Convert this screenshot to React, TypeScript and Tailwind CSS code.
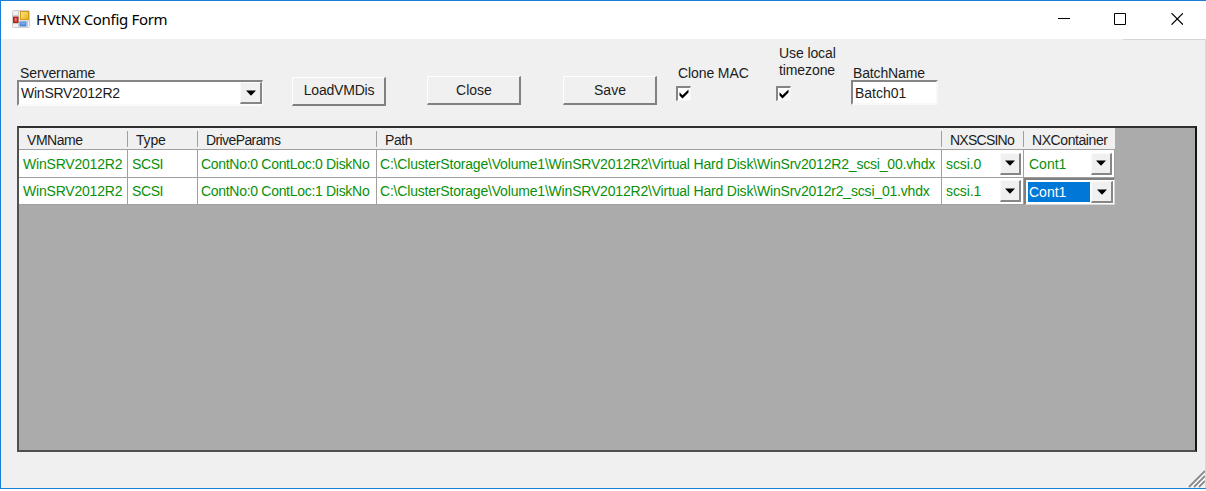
import type { ReactNode } from "react";

function FormIcon() {
  return (
    <svg width="18" height="18" viewBox="0 0 18 18">
      <defs>
        <linearGradient id="y" x1="0" y1="0" x2="1" y2="1">
          <stop offset="0" stopColor="#ffe58c" />
          <stop offset="1" stopColor="#eeb012" />
        </linearGradient>
        <linearGradient id="b" x1="0" y1="0" x2="0" y2="1">
          <stop offset="0" stopColor="#8fc0f8" />
          <stop offset="1" stopColor="#3d82de" />
        </linearGradient>
      </defs>
      <rect x="0.5" y="0.5" width="17" height="17" rx="1" fill="#f1f1f1" stroke="#cfcfcf" />
      <path d="M1 5.500H7M1 13.500H7M6.500 1V17M15.500 11V17M7 11H17" stroke="#cccccc" />
      <rect x="1.500" y="7" width="4.500" height="5.500" fill="#cc3e30" stroke="#a3251d" />
      <rect x="3" y="8.500" width="1.500" height="2" fill="#ee9186" />
      <rect x="8.500" y="1.500" width="8" height="8" fill="url(#y)" stroke="#cf9c22" />
      <rect x="8" y="12" width="6" height="4" fill="url(#b)" stroke="#4c83cc" />
    </svg>
  );
}

function ArrowButton({ className = "" }: { className?: string }) {
  return (
    <div
      className={
        "flex shrink-0 items-center justify-center border-t border-l border-b-2 border-r-2 border-t-[#fafafa] border-l-[#fafafa] border-b-[#868686] border-r-[#868686] bg-[#f0f0f0] " +
        className
      }
    >
      <svg width="10" height="6" viewBox="0 0 10 6">
        <path d="M0 0.500H10L5 5.800Z" fill="#000" />
      </svg>
    </div>
  );
}

function Button({ children, className = "" }: { children: ReactNode; className?: string }) {
  return (
    <button
      className={
        "h-[29px] w-[94px] shrink-0 border-t border-l border-b-2 border-r-2 border-t-white border-l-white border-b-[#808080] border-r-[#808080] bg-[#f0f0f0] pl-px text-center leading-[16px] " +
        className
      }
    >
      {children}
    </button>
  );
}

function CheckBox() {
  return (
    <div className="flex size-[15px] items-center justify-center border-t-2 border-l-2 border-b border-r border-t-[#858585] border-l-[#858585] border-b-[#f6f6f6] border-r-[#f6f6f6] bg-white">
      <svg width="10" height="10" viewBox="0 0 10 10">
        <path d="M0.500 3.200L3.500 6.200L9.500 0.400V3.600L3.500 9.400L0.500 6.400Z" fill="#000" />
      </svg>
    </div>
  );
}

const headers = [
  { label: "VMName", cls: "tracking-[-0.45px]" },
  { label: "Type", cls: "tracking-[-0.2px]" },
  { label: "DriveParams", cls: "tracking-[-0.6px]" },
  { label: "Path", cls: "tracking-[-0.4px]" },
  { label: "NXSCSINo", cls: "tracking-[-0.75px]" },
  { label: "NXContainer", cls: "tracking-[-0.42px]" },
];

const rows = [
  {
    drive: "ContNo:0 ContLoc:0 DiskNo",
    path: "C:\\ClusterStorage\\Volume1\\WinSRV2012R2\\Virtual Hard Disk\\WinSrv2012R2_scsi_00.vhdx",
    scsi: "scsi.0",
    selected: false,
  },
  {
    drive: "ContNo:0 ContLoc:1 DiskNo",
    path: "C:\\ClusterStorage\\Volume1\\WinSRV2012R2\\Virtual Hard Disk\\WinSrv2012r2_scsi_01.vhdx",
    scsi: "scsi.1",
    selected: true,
  },
];

const columns = "grid grid-cols-[109px_70px_179px_565px_82px_91px]";
const cell = "flex items-center overflow-hidden border-r border-b border-[#a0a0a0] bg-white";

export default function App() {
  return (
    <div className="h-[491px] w-[1206px] overflow-hidden bg-white font-['Liberation_Sans',Arial,sans-serif] text-[14px] leading-[16px] whitespace-nowrap text-[#1c1c1c]">
      <div className="flex h-[489px] flex-col border-t border-b border-l border-[#1a7fd4]">
        <header className="flex h-[38px] shrink-0 items-start bg-white pl-[11px]">
          <div className="mt-[9px]">
            <FormIcon />
          </div>
          <h1 className="mt-[8px] ml-[6px] font-['Noto_Sans',sans-serif] text-[15px] leading-[20px] tracking-[-0.32px] text-black">
            HVtNX Config Form
          </h1>
          <div className="mt-[12px] mr-[23px] ml-auto flex gap-[44px]">
            <svg width="12" height="12" viewBox="0 0 12 12">
              <path d="M0 5.500H12" stroke="#000" />
            </svg>
            <svg width="12" height="12" viewBox="0 0 12 12">
              <path d="M0.500 0.500H11.500V11.500H0.500Z" fill="none" stroke="#000" />
            </svg>
            <svg width="13" height="12" viewBox="0 0 13 12">
              <path d="M1.500 0.200L13 11.700M13 0.200L1.500 11.700" stroke="#000" strokeWidth="1.200" />
            </svg>
          </div>
        </header>

        <main className="flex grow flex-col border-r border-[#d8d8d8] bg-[#f0f0f0] pl-[16px]">
          <div className="flex justify-end">
            <div className="h-px w-[82px] bg-[#d5d5d5]" />
          </div>
          <div className="flex h-[86px] items-start">
            <div className="mt-[25px] w-[246px]">
              <div className="pl-[3px] tracking-[-0.1px]">Servername</div>
              <div className="-mt-px flex h-[26px] border-t-2 border-l-2 border-r border-b-2 border-t-[#858585] border-l-[#858585] border-b-[#fafafa] border-r-[#fafafa] bg-white">
                <div className="grow pt-[3px] pl-[2px] tracking-[-0.24px]">WinSRV2012R2</div>
                <ArrowButton className="w-[22px]" />
              </div>
            </div>
            <Button className="mt-[37px] ml-[29px] pb-[2px] tracking-[-0.2px]">LoadVMDis</Button>
            <Button className="mt-[36px] ml-[41px] pb-px">Close</Button>
            <Button className="mt-[36px] ml-[42px] pb-px">Save</Button>
            <div className="mt-[25px] ml-[19px] w-[100px]">
              <div className="pl-[2px] tracking-[-0.1px]">Clone MAC</div>
              <div className="mt-[5px]">
                <CheckBox />
              </div>
            </div>
            <div className="mt-[5px] w-[75px]">
              <div className="pl-[3px] leading-[17px] tracking-[-0.1px]">
                Use local
                <br />
                timezone
              </div>
              <div className="mt-[7px]">
                <CheckBox />
              </div>
            </div>
            <div className="mt-[25px] w-[87px]">
              <div className="pl-[2px] tracking-[-0.15px]">BatchName</div>
              <div className="-mt-px h-[25px] border-t-2 border-l-2 border-b-2 border-r-2 border-t-[#858585] border-l-[#858585] border-b-[#f8f8f8] border-r-[#f8f8f8] bg-white pt-[3px] pl-[2px]">
                Batch01
              </div>
            </div>
          </div>

          <div className="h-[326px] w-[1180px] border-2 border-t-[#303030] border-l-[#505050] border-b-[#505050] border-r-[#151515] bg-[#ababab]">
            <div className="w-[1096px]">
              <div className={columns + " h-[22px] border-b border-[#a0a0a0] bg-[#f0f0f0]"}>
                {headers.map((h, i) => (
                  <div key={h.label} className="flex pt-[3px] pb-[2px]">
                    <div className={"grow pt-[2px] pl-[8px] leading-[14px] " + h.cls}>{h.label}</div>
                    {i < 5 && <div className="w-px bg-[#a0a0a0]" />}
                  </div>
                ))}
              </div>
              {rows.map((r) => (
                <div key={r.scsi} className={columns + (r.selected ? " h-[27px]" : " h-[28px]") + " text-[#0a8f0a]"}>
                  <div className={cell + " pl-[4px] tracking-[-0.2px]"}>WinSRV2012R2</div>
                  <div className={cell + " pl-[4px] tracking-[-0.4px]"}>SCSI</div>
                  <div className={cell + " pl-[3px] tracking-[-0.3px]"}>{r.drive}</div>
                  <div className={cell + " pl-[3px] tracking-[-0.19px]"}>{r.path}</div>
                  <div className={cell + " justify-between pr-[2px] pl-[4px] tracking-[-0.1px]"}>
                    {r.scsi}
                    <ArrowButton className="h-[22px] w-[21px]" />
                  </div>
                  {r.selected ? (
                    <div className="flex items-center justify-between border-t-2 border-l-2 border-b border-r border-t-[#808080] border-l-[#808080] border-b-[#d8d8d8] border-r-[#d8d8d8] bg-white pr-px pl-[2px]">
                      <div className="flex h-[20px] w-[62px] items-center bg-[#0078d7] pl-px text-white">Cont1</div>
                      <ArrowButton className="h-[22px] w-[22px]" />
                    </div>
                  ) : (
                    <div className={cell + " justify-between pr-[2px] pl-[5px]"}>
                      Cont1
                      <ArrowButton className="h-[22px] w-[21px]" />
                    </div>
                  )}
                </div>
              ))}
            </div>
          </div>

          <div className="flex grow items-end justify-end">
            <svg width="17" height="18" viewBox="0 0 17 18">
              <path d="M1 17L17 1M6 17L17 6M11 17L17 11" stroke="#8a8a8a" strokeWidth="1.800" />
              <path d="M3 17.500L17 3.500M8 17.500L17 8.500M13 17.500L17 13.500" stroke="#fff" />
            </svg>
          </div>
        </main>
      </div>
    </div>
  );
}
